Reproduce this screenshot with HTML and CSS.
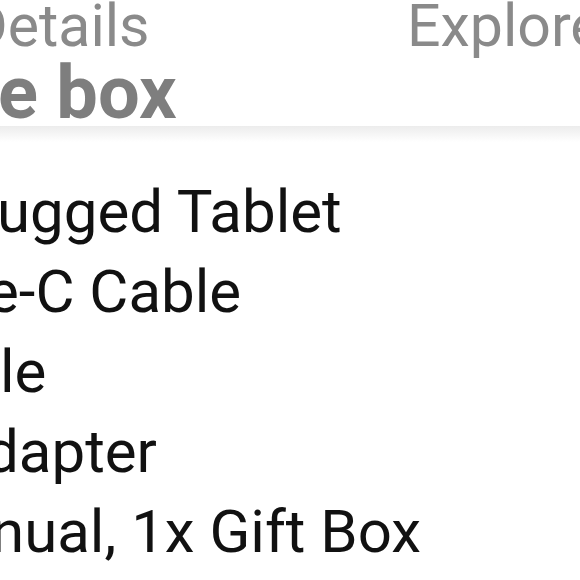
FILE: index.html
```html
<!DOCTYPE html>
<html lang="en">
<head>
<meta charset="utf-8">
<title>What's in the box</title>
<link rel="stylesheet" href="styles.css">
</head>
<body>
<header class="top">
  <nav class="tabs">
    <span class="tab tab-details">Details</span>
    <span class="tab tab-explore">Explore</span>
  </nav>
  <h1 class="title">e box</h1>
</header>
<ul class="items">
  <li class="item i1">ugged Tablet</li>
  <li class="item i2">e-C Cable</li>
  <li class="item i3">le</li>
  <li class="item i4">dapter</li>
  <li class="item i5">nual, 1x Gift Box</li>
</ul>
</body>
</html>
```
FILE: styles.css
```css
html, body {
  margin: 0;
  padding: 0;
  background: #fff;
  width: 580px;
  height: 580px;
  overflow: hidden;
  font-family: Roboto, "Liberation Sans", sans-serif;
}

.top {
  position: relative;
  height: 126px;
  background: #fff;
}

.top::after {
  content: "";
  position: absolute;
  left: 0;
  right: 0;
  top: 126px;
  height: 16px;
  background: linear-gradient(#ececec, #fff);
}

.tabs {
  display: grid;
  grid-template-columns: 438px auto;
  margin-left: -31px;
  height: 52px;
  font-size: 59px;
  line-height: 52px;
  color: #8a8a8a;
  white-space: nowrap;
}

.title {
  margin: 7px 0 0 -2px;
  font-size: 74px;
  line-height: 67px;
  font-weight: 700;
  color: #7e7e7e;
  white-space: nowrap;
}

.items {
  list-style: none;
  margin: 46px 0 0 0;
  padding: 0;
  font-size: 60px;
  line-height: 80px;
  color: #111;
  white-space: nowrap;
}

.i1 { margin-left: -3px; }
.i2 { margin-left: -13px; }
.i3 { margin-left: 0; }
.i4 { margin-left: -15px; }
.i5 { margin-left: -9px; }
```
